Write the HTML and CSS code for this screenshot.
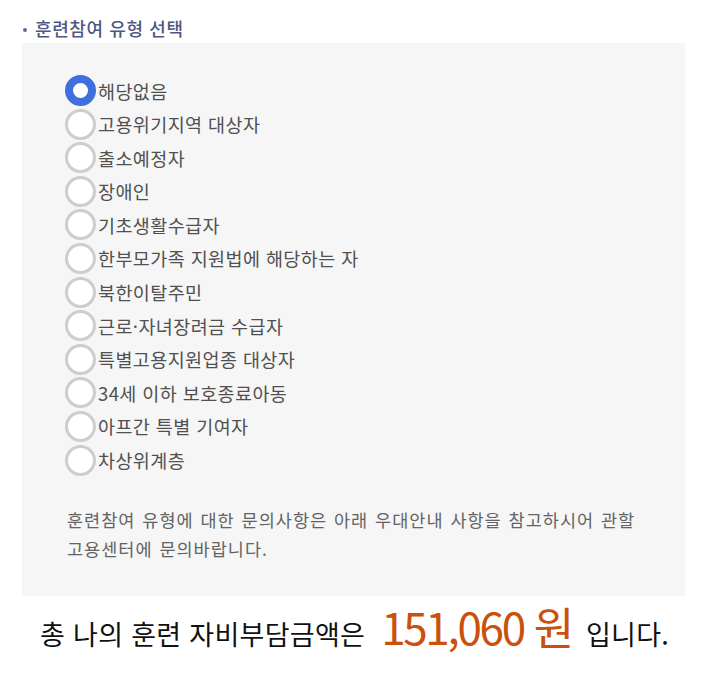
FILE: index.html
```html
<!DOCTYPE html>
<html lang="ko">
<head>
  <meta charset="UTF-8">
  <meta name="viewport" content="width=device-width, initial-scale=1.0">
  <title>훈련참여 유형 선택</title>
  <link rel="stylesheet" href="styles.css">
</head>
<body>

  <div class="container">
    <!-- 훈련참여 유형 -->
    <h3 class="section-title">훈련참여 유형 선택</h3>

    <div class="type-box">
      <ul class="radio-list">
        <li><label><input type="radio" name="type" checked><span>해당없음</span></label></li>
        <li><label><input type="radio" name="type"><span>고용위기지역 대상자</span></label></li>
        <li><label><input type="radio" name="type"><span>출소예정자</span></label></li>
        <li><label><input type="radio" name="type"><span>장애인</span></label></li>
        <li><label><input type="radio" name="type"><span>기초생활수급자</span></label></li>
        <li><label><input type="radio" name="type"><span>한부모가족 지원법에 해당하는 자</span></label></li>
        <li><label><input type="radio" name="type"><span>북한이탈주민</span></label></li>
        <li><label><input type="radio" name="type"><span>근로·자녀장려금 수급자</span></label></li>
        <li><label><input type="radio" name="type"><span>특별고용지원업종 대상자</span></label></li>
        <li><label><input type="radio" name="type"><span>34세 이하 보호종료아동</span></label></li>
        <li><label><input type="radio" name="type"><span>아프간 특별 기여자</span></label></li>
        <li><label><input type="radio" name="type"><span>차상위계층</span></label></li>
      </ul>

      <p class="notice">훈련참여 유형에 대한 문의사항은 아래 우대안내 사항을 참고하시어 관할<br>고용센터에 문의바랍니다.</p>
    </div>

    <!-- 자비부담금액 -->
    <p class="total">총 나의 훈련 자비부담금액은 <strong class="amount">151,060 원</strong> 입니다.</p>
  </div>

</body>
</html>
```

FILE: styles.css
```css
body {
  font-family: 'Noto Sans CJK KR', 'Noto Sans', sans-serif;
  background-color: #fff;
  margin: 0;
  padding: 0;
}

.container {
  padding: 14px 20px 0 22px;
}

.section-title {
  position: relative;
  margin: 0;
  padding-left: 13px;
  font-size: 18px;
  font-weight: 500;
  line-height: 29px;
  letter-spacing: 0.6px;
  color: #4d5783;
}

.section-title::before {
  content: "";
  position: absolute;
  left: 1px;
  top: 14px;
  width: 4px;
  height: 4px;
  border-radius: 50%;
  background-color: #5f6a92;
}

.type-box {
  background-color: #f6f6f6;
  padding: 32px 20px 33px 43px;
}

.radio-list {
  list-style: none;
  margin: 0;
  padding: 0;
}

.radio-list li {
  height: 33.6px;
}

.radio-list label {
  display: flex;
  align-items: center;
  gap: 2px;
  cursor: pointer;
}

.radio-list input {
  appearance: none;
  -webkit-appearance: none;
  margin: 0;
  width: 31px;
  height: 31px;
  border: 3px solid #cdcdcd;
  border-radius: 50%;
  background-color: #fff;
  box-sizing: border-box;
}

.radio-list input:checked {
  border: 8px solid #3f6fdd;
}

.radio-list span {
  font-size: 18.5px;
  color: #505050;
  letter-spacing: 0.4px;
}

.notice {
  margin: 27px 0 0 2px;
  font-size: 17.5px;
  line-height: 29px;
  color: #636363;
  letter-spacing: 1px;
  word-spacing: 1px;
}

.total {
  margin: 0 0 0 18px;
  font-size: 27px;
  line-height: 60px;
  color: #111;
  letter-spacing: 0.3px;
}

.total .amount {
  font-size: 44px;
  font-weight: 400;
  color: #c9510c;
  letter-spacing: -2.3px;
  margin: 0 6px 0 8px;
}
```
